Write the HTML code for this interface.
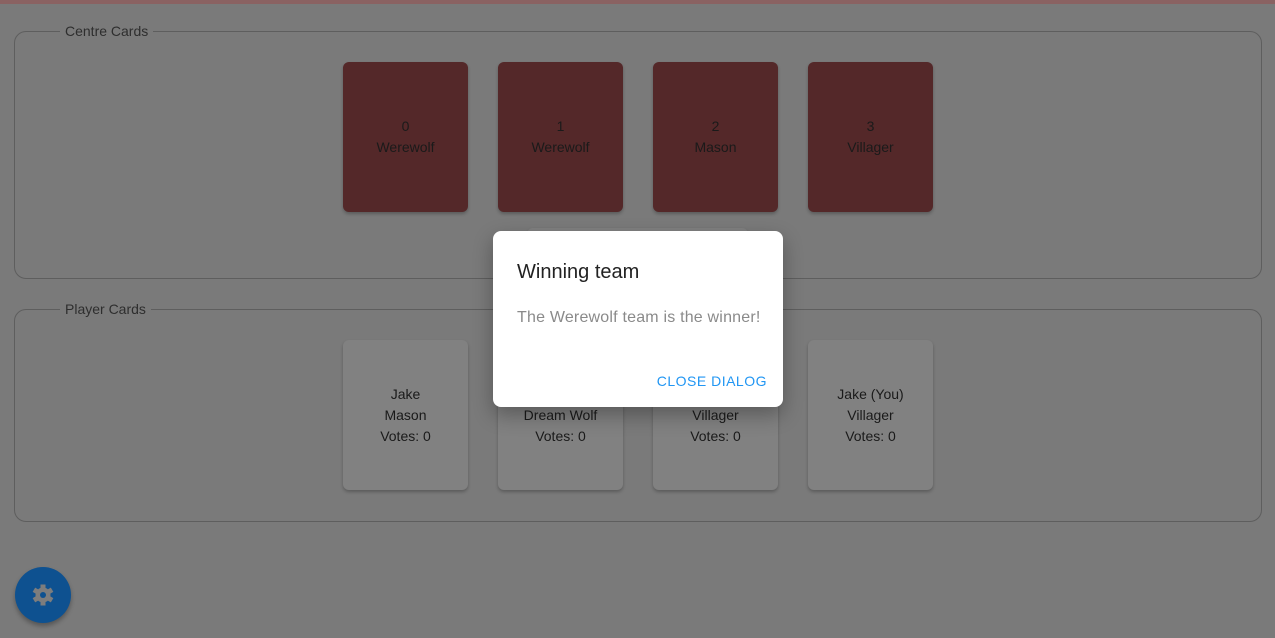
<!DOCTYPE html>
<html><head><style>
body{margin:0;width:1275px;height:638px;background:#7a7a7a;font-family:"Liberation Sans",sans-serif;position:relative;overflow:hidden}
.top{position:absolute;left:0;top:0;width:1275px;height:4px;background:#8a6262}
.fs{position:absolute;left:14px;width:1246px;border:1px solid #5e5e5e;border-radius:12px}
.lg{position:absolute;left:45px;top:-9px;background:#7a7a7a;padding:0 5px;font-size:14px;color:#2e2e2e}
.card{position:absolute;width:125px;height:150px;border-radius:6px;box-shadow:0 2px 3px rgba(0,0,0,.25);display:flex;flex-direction:column;justify-content:center;align-items:center;font-size:14px;line-height:21px;color:#1a1a1a;text-align:center}
.r{background:#542829}
.g{background:#818181}
.dlg{position:absolute;left:493px;top:231px;width:290px;height:176px;background:#fff;border-radius:8px;box-shadow:0 8px 20px rgba(0,0,0,.3)}
.fab{position:absolute;left:15px;top:567px;width:56px;height:56px;border-radius:50%;background:#0e5190;box-shadow:0 3px 5px rgba(0,0,0,.3)}
</style></head><body>
<div class="top"></div>
<div class="fs" style="top:31px;height:246px"><span class="lg">Centre Cards</span></div>
<div class="fs" style="top:309px;height:211px"><span class="lg">Player Cards</span></div>
<div class="card r" style="left:343px;top:62px"><div>0</div><div>Werewolf</div></div>
<div class="card r" style="left:498px;top:62px"><div>1</div><div>Werewolf</div></div>
<div class="card r" style="left:653px;top:62px"><div>2</div><div>Mason</div></div>
<div class="card r" style="left:808px;top:62px"><div>3</div><div>Villager</div></div>
<div class="card g" style="left:527px;top:228px;width:221px;height:40px"></div>
<div class="card g" style="left:343px;top:340px"><div>Jake</div><div>Mason</div><div>Votes: 0</div></div>
<div class="card g" style="left:498px;top:340px"><div>&nbsp;</div><div>Dream Wolf</div><div>Votes: 0</div></div>
<div class="card g" style="left:653px;top:340px"><div>&nbsp;</div><div>Villager</div><div>Votes: 0</div></div>
<div class="card g" style="left:808px;top:340px"><div>Jake (You)</div><div>Villager</div><div>Votes: 0</div></div>
<div class="dlg">
<div style="position:absolute;left:24px;top:30px;font-size:20px;color:#222">Winning team</div>
<div style="position:absolute;left:24px;top:78px;font-size:16px;color:#8a8a8a;letter-spacing:.2px">The Werewolf team is the winner!</div>
<div style="position:absolute;right:16px;top:142px;font-size:14px;color:#2196f3;letter-spacing:.5px">CLOSE DIALOG</div>
</div>
<div class="fab"><svg width="56" height="56" viewBox="-28 -28 56 56"><g fill="#7d7d7d"><circle r="7.5"/><g id="t"><rect x="-2.5" y="-10.5" width="5" height="5"/></g><use href="#t" transform="rotate(60)"/><use href="#t" transform="rotate(120)"/><use href="#t" transform="rotate(180)"/><use href="#t" transform="rotate(240)"/><use href="#t" transform="rotate(300)"/></g><circle r="3" fill="#0e5190"/></svg></div>
</body></html>
